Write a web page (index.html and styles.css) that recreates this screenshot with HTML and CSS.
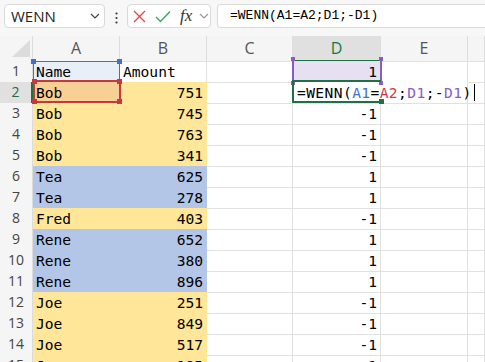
FILE: index.html
```html
<!DOCTYPE html>
<html lang="de">
<head>
    <meta charset="UTF-8">
    <title>WENN</title>
    <link rel="stylesheet" href="styles.css">
</head>
<body>
    <div class="formula-bar">
        <div class="name-box">
            <span>WENN</span>
            <svg width="10" height="6" viewBox="0 0 10 6"><path d="M1 1 L5 5 L9 1" fill="none" stroke="#444" stroke-width="1.2"/></svg>
        </div>
        <div class="kebab">
            <svg width="3" height="12" viewBox="0 0 3 12"><circle cx="1.5" cy="1.5" r="1.1" fill="#333"/><circle cx="1.5" cy="6" r="1.1" fill="#333"/><circle cx="1.5" cy="10.5" r="1.1" fill="#333"/></svg>
        </div>
        <div class="fx-box">
            <svg class="ico-x" width="13" height="13" viewBox="0 0 13 13"><path d="M1 1 L12 12 M12 1 L1 12" stroke="#e5484d" stroke-width="1.4" fill="none"/></svg>
            <svg class="ico-ok" width="16" height="13" viewBox="0 0 16 13"><path d="M1 7 L5.5 11.5 L15 1.5" stroke="#3aa55d" stroke-width="1.4" fill="none"/></svg>
            <span class="fx">fx</span>
            <svg class="ico-dd" width="10" height="6" viewBox="0 0 10 6"><path d="M1 1 L5 5 L9 1" fill="none" stroke="#999" stroke-width="1.2"/></svg>
        </div>
        <div class="formula-input">=WENN(A1=A2;D1;-D1)</div>
    </div>

    <div class="sheet">
        <div class="row hdr">
            <div class="corner"><svg width="18" height="17" viewBox="0 0 18 17"><path d="M18 0 L18 17 L0 17 Z" fill="#dcdcdc"/></svg></div>
            <div class="ch">A</div>
            <div class="ch">B</div>
            <div class="ch">C</div>
            <div class="ch sel">D</div>
            <div class="ch">E</div>
            <div class="ch"></div>
        </div>

        <div class="row">
            <div class="rh">1</div>
            <div class="c ref-a">Name</div>
            <div class="c">Amount</div>
            <div class="c"></div>
            <div class="c num ref-d">1</div>
            <div class="c"></div>
            <div class="c"></div>
        </div>
        <div class="row">
            <div class="rh sel">2</div>
            <div class="c y active-a">Bob</div>
            <div class="c y num">751</div>
            <div class="c"></div>
            <div class="c edit">=WENN(<span class="r-blue">A1</span>=<span class="r-red">A2</span>;<span class="r-purple">D1</span>;-<span class="r-purple">D1</span>)<span class="caret"></span></div>
            <div class="c"></div>
        </div>
        <div class="row">
            <div class="rh">3</div>
            <div class="c y">Bob</div>
            <div class="c y num">745</div>
            <div class="c"></div>
            <div class="c num">-1</div>
            <div class="c"></div>
            <div class="c"></div>
        </div>
        <div class="row">
            <div class="rh">4</div>
            <div class="c y">Bob</div>
            <div class="c y num">763</div>
            <div class="c"></div>
            <div class="c num">-1</div>
            <div class="c"></div>
            <div class="c"></div>
        </div>
        <div class="row">
            <div class="rh">5</div>
            <div class="c y">Bob</div>
            <div class="c y num">341</div>
            <div class="c"></div>
            <div class="c num">-1</div>
            <div class="c"></div>
            <div class="c"></div>
        </div>
        <div class="row">
            <div class="rh">6</div>
            <div class="c b">Tea</div>
            <div class="c b num">625</div>
            <div class="c"></div>
            <div class="c num">1</div>
            <div class="c"></div>
            <div class="c"></div>
        </div>
        <div class="row">
            <div class="rh">7</div>
            <div class="c b">Tea</div>
            <div class="c b num">278</div>
            <div class="c"></div>
            <div class="c num">1</div>
            <div class="c"></div>
            <div class="c"></div>
        </div>
        <div class="row">
            <div class="rh">8</div>
            <div class="c y">Fred</div>
            <div class="c y num">403</div>
            <div class="c"></div>
            <div class="c num">-1</div>
            <div class="c"></div>
            <div class="c"></div>
        </div>
        <div class="row">
            <div class="rh">9</div>
            <div class="c b">Rene</div>
            <div class="c b num">652</div>
            <div class="c"></div>
            <div class="c num">1</div>
            <div class="c"></div>
            <div class="c"></div>
        </div>
        <div class="row">
            <div class="rh">10</div>
            <div class="c b">Rene</div>
            <div class="c b num">380</div>
            <div class="c"></div>
            <div class="c num">1</div>
            <div class="c"></div>
            <div class="c"></div>
        </div>
        <div class="row">
            <div class="rh">11</div>
            <div class="c b">Rene</div>
            <div class="c b num">896</div>
            <div class="c"></div>
            <div class="c num">1</div>
            <div class="c"></div>
            <div class="c"></div>
        </div>
        <div class="row">
            <div class="rh">12</div>
            <div class="c y">Joe</div>
            <div class="c y num">251</div>
            <div class="c"></div>
            <div class="c num">-1</div>
            <div class="c"></div>
            <div class="c"></div>
        </div>
        <div class="row">
            <div class="rh">13</div>
            <div class="c y">Joe</div>
            <div class="c y num">849</div>
            <div class="c"></div>
            <div class="c num">-1</div>
            <div class="c"></div>
            <div class="c"></div>
        </div>
        <div class="row">
            <div class="rh">14</div>
            <div class="c y">Joe</div>
            <div class="c y num">517</div>
            <div class="c"></div>
            <div class="c num">-1</div>
            <div class="c"></div>
            <div class="c"></div>
        </div>
        <div class="row">
            <div class="rh">15</div>
            <div class="c y">Joe</div>
            <div class="c y num">185</div>
            <div class="c"></div>
            <div class="c num">-1</div>
            <div class="c"></div>
            <div class="c"></div>
        </div>

        <!-- reference boxes drawn over the grid -->
        <div class="box box-a1"><i class="sq tl"></i><i class="sq tr"></i></div>
        <div class="box box-a2"><i class="sq tl"></i><i class="sq tr"></i><i class="sq bl"></i><i class="sq br"></i></div>
        <div class="box box-d1"><i class="sq tl"></i><i class="sq tr"></i><i class="sq bl"></i><i class="sq br"></i></div>
        <div class="box box-d2"><i class="sq br"></i></div>
    </div>
</body>
</html>
```

FILE: styles.css
```css
body {
    margin: 0;
    width: 485px;
    height: 362px;
    overflow: hidden;
    background: #fff;
    font-family: "Open Sans", "Noto Sans", sans-serif;
    color: #000;
}

/* formula bar */

.formula-bar {
    display: flex;
    align-items: flex-start;
    height: 36px;
    padding: 4px 0 0 4px;
    box-sizing: border-box;
    background: #f7f7f7;
}

.name-box {
    display: flex;
    align-items: center;
    justify-content: space-between;
    width: 101px;
    height: 24px;
    padding: 0 4px 0 6px;
    box-sizing: border-box;
    background: #fff;
    border: 1px solid #dadada;
    border-radius: 4px;
    font-size: 15px;
    color: #222;
}

.kebab {
    display: flex;
    justify-content: center;
    width: 22px;
    padding-top: 8px;
}

.fx-box {
    display: flex;
    align-items: center;
    width: 84px;
    height: 24px;
    padding-left: 5px;
    box-sizing: border-box;
    background: #fff;
    border: 1px solid #dadada;
    border-radius: 4px;
}

.ico-ok {
    margin-left: 9px;
}

.fx {
    display: inline-block;
    width: 15px;
    margin-left: 9px;
    font-family: "Liberation Serif", serif;
    font-style: italic;
    font-size: 17px;
    line-height: 20px;
    color: #333;
}

.ico-dd {
    margin-left: 4px;
}

.formula-input {
    flex: 1;
    height: 24px;
    margin-left: 6px;
    padding-left: 12px;
    box-sizing: border-box;
    background: #fff;
    border: 1px solid #dadada;
    border-right: none;
    border-radius: 4px 0 0 4px;
    font-family: "Liberation Mono", monospace;
    font-size: 13px;
    line-height: 22px;
    white-space: nowrap;
}

/* grid */

.sheet {
    position: relative;
}

.row {
    display: grid;
    grid-template-columns: 33px 87px 87px 86px 88px 87px 1fr;
    height: 21px;
}

.row.hdr {
    height: 25px;
}

.corner,
.ch,
.rh {
    background: #f5f5f5;
    box-sizing: border-box;
    border-right: 1px solid #dcdcdc;
    border-bottom: 1px solid #e1e1e1;
}

.corner {
    display: flex;
    justify-content: flex-end;
    padding: 4px 2px 0 0;
}

.ch {
    text-align: center;
    font-size: 16px;
    line-height: 24px;
    color: #555;
}

.ch.sel {
    background: #e0e0e0;
    color: #107c41;
    border-bottom: 2px solid #1f7044;
}

.rh {
    text-align: center;
    font-size: 14px;
    line-height: 20px;
    color: #444;
}

.rh.sel {
    background: #e0e0e0;
    color: #1f6b44;
    border-right: 2px solid #1f7044;
}

.c {
    box-sizing: border-box;
    border-right: 1px solid #e1e1e1;
    border-bottom: 1px solid #e1e1e1;
    padding: 1px 3px 0 3px;
    font-family: "DejaVu Sans Mono", monospace;
    font-size: 14.6px;
    line-height: 20px;
    white-space: nowrap;
}

.num {
    text-align: right;
}

.y {
    background: #ffe699;
    border-color: #ffe699;
}

.b {
    background: #b4c6e7;
    border-color: #b4c6e7;
}

.ref-a {
    background: #e9eff9;
}

.ref-d {
    background: #e6e0f2;
}

.active-a {
    background: #f8cf94;
}

.edit {
    grid-column: span 2;
    padding-left: 4px;
    background: #fff;
    letter-spacing: 0.4px;
    position: relative;
    z-index: 1;
}

.r-blue { color: #3f73c9; }
.r-red { color: #d23a3f; }
.r-purple { color: #8a5cc8; }

.caret {
    display: inline-block;
    width: 1px;
    height: 17px;
    margin-left: 2px;
    vertical-align: -3px;
    background: #000;
}

/* range boxes */

.box {
    position: absolute;
    box-sizing: border-box;
    z-index: 2;
}

.sq {
    position: absolute;
    width: 5px;
    height: 5px;
}

.sq.tl { left: -3px; top: -3px; }
.sq.tr { right: -3px; top: -3px; }
.sq.bl { left: -3px; bottom: -3px; }
.sq.br { right: -3px; bottom: -3px; }

.box-a1 {
    left: 33px;
    top: 25px;
    width: 87px;
    height: 21px;
    border: 1px solid #3f73c9;
}

.box-a1 .sq {
    background: #3f73c9;
}

.box-a2 {
    left: 33px;
    top: 44px;
    width: 88px;
    height: 23px;
    border: 2px solid #c8373a;
}

.box-a2 .sq {
    background: #c8373a;
}

.box-d1 {
    left: 292px;
    top: 24px;
    width: 90px;
    height: 22px;
    border-left: 2px solid #8a5cc8;
    border-right: 2px solid #8a5cc8;
}

.box-d1 .sq {
    width: 4px;
    height: 4px;
    background: #8a5cc8;
}

.box-d2 {
    left: 292px;
    top: 44px;
    width: 89px;
    height: 23px;
    border: 2px solid #1f7044;
    border-right: none;
}

.box-d2 .sq {
    background: #1f7044;
}
```
